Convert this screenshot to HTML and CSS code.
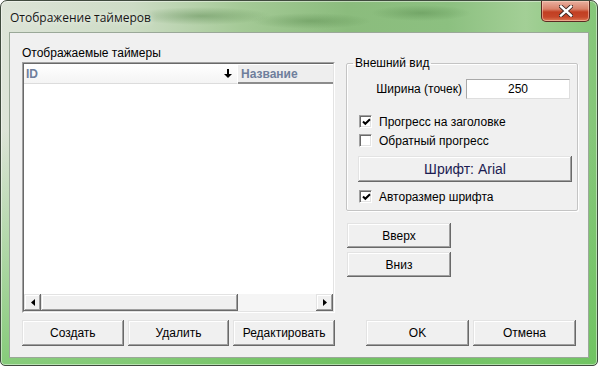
FILE: index.html
```html
<!DOCTYPE html>
<html lang="ru">
<head>
  <meta charset="UTF-8" />
  <title>Отображение таймеров</title>
  <link rel="stylesheet" href="styles.css">
</head>
<body>
  <div class="window">
    <div class="titlebar">
      <span class="title">Отображение таймеров</span>
      <button class="close" type="button" aria-label="Закрыть">
        <svg width="14" height="12" viewBox="0 0 14 12">
          <path d="M2 1.5 L12 10.5 M12 1.5 L2 10.5" stroke="#3a2520" stroke-width="4.2" stroke-linecap="square"/>
          <path d="M2 1.5 L12 10.5 M12 1.5 L2 10.5" stroke="#ffffff" stroke-width="2.4" stroke-linecap="square"/>
        </svg>
      </button>
    </div>

    <div class="client">
      <div class="left-col">
        <div class="caption">Отображаемые таймеры</div>
        <div class="list">
          <div class="list-inner">
            <div class="list-head">
              <div class="col col-id">
                ID
                <svg class="sort-arrow" width="8" height="9" viewBox="0 0 8 9">
                  <path d="M3 0h2v5h3l-4 4-4-4h3z" fill="#000"/>
                </svg>
              </div>
              <div class="col col-name">Название</div>
            </div>
            <div class="list-body"></div>
            <div class="hscroll">
              <span class="sb-btn">
                <svg width="4" height="7" viewBox="0 0 4 7"><path d="M4 0v7L0 3.5z" fill="#000"/></svg>
              </span>
              <span class="sb-thumb"></span>
              <span class="sb-track"></span>
              <span class="sb-btn">
                <svg width="4" height="7" viewBox="0 0 4 7"><path d="M0 0v7l4-3.5z" fill="#000"/></svg>
              </span>
            </div>
          </div>
        </div>
        <div class="btn-row">
          <button class="btn" type="button">Создать</button>
          <button class="btn" type="button">Удалить</button>
          <button class="btn" type="button">Редактировать</button>
        </div>
      </div>

      <div class="right-col">
        <fieldset class="group">
          <legend>Внешний вид</legend>
          <div class="field-row">
            <label for="width">Ширина (точек)</label>
            <input id="width" class="text-input" type="text" value="250">
          </div>
          <div class="check">
            <span class="box">
              <svg width="9" height="9" viewBox="0 0 9 9"><path d="M1 3.5 L3.3 5.8 L8 1.2" stroke="#000" stroke-width="2" fill="none"/></svg>
            </span>
            Прогресс на заголовке
          </div>
          <div class="check">
            <span class="box"></span>
            Обратный прогресс
          </div>
          <button class="btn font-btn" type="button">Шрифт: Arial</button>
          <div class="check check-last">
            <span class="box">
              <svg width="9" height="9" viewBox="0 0 9 9"><path d="M1 3.5 L3.3 5.8 L8 1.2" stroke="#000" stroke-width="2" fill="none"/></svg>
            </span>
            Авторазмер шрифта
          </div>
        </fieldset>

        <div class="move-btns">
          <button class="btn" type="button">Вверх</button>
          <button class="btn" type="button">Вниз</button>
        </div>

        <div class="dialog-btns">
          <button class="btn" type="button">OK</button>
          <button class="btn" type="button">Отмена</button>
        </div>
      </div>
    </div>
  </div>
</body>
</html>
```

FILE: styles.css
```css
:root {
  --face: #f0f0f0;
  --shadow: #a0a0a0;
  --dark: #696969;
  --light: #e3e3e3;
  --white: #ffffff;
  --text: #000000;
}

* {
  box-sizing: border-box;
  margin: 0;
  padding: 0;
}

body {
  background: #ffffff;
  font-family: 'Liberation Sans', Arial, sans-serif;
  font-size: 12px;
  color: var(--text);
}

.window {
  width: 598px;
  height: 366px;
  border: 1px solid #3f4a3d;
  border-radius: 7px 7px 5px 5px;
  display: flex;
  flex-direction: column;
  padding: 0 8px 7px 8px;
  box-shadow: inset 0 0 0 1px rgba(255, 255, 255, 0.45);
  background:
    radial-gradient(ellipse 70px 9px at 200px 15px, rgba(70, 120, 60, 0.4), transparent),
    radial-gradient(ellipse 60px 8px at 310px 20px, rgba(70, 120, 60, 0.35), transparent),
    radial-gradient(ellipse 50px 8px at 420px 12px, rgba(70, 120, 60, 0.35), transparent),
    linear-gradient(180deg, transparent 0, transparent 35%, rgba(105, 195, 90, 0.75) 100%),
    linear-gradient(90deg, #dde4d8 0%, #cddcc5 22%, #a5ca97 40%, #8bbc7d 58%, #8cc080 75%, #a3cf96 88%, #84c678 100%);
}

.titlebar {
  height: 31px;
  display: flex;
  align-items: flex-start;
  justify-content: space-between;
}

.title {
  font-family: 'Open Sans', 'Noto Sans', sans-serif;
  font-size: 12px;
  color: #161616;
  margin: 8px 0 0 1px;
  text-shadow: 0 0 6px rgba(255, 255, 255, 0.9);
}

.close {
  width: 49px;
  height: 21px;
  margin-right: -1px;
  border: 1px solid #5b2a22;
  border-top: none;
  border-radius: 0 0 5px 5px;
  display: flex;
  align-items: center;
  justify-content: center;
  background: linear-gradient(180deg, #e9b0a0 0%, #d9826a 40%, #c23f22 55%, #c6472a 80%, #de7a55 100%);
  box-shadow: inset 0 0 0 1px rgba(255, 220, 200, 0.5);
}

.client {
  flex: 1;
  display: flex;
  background: var(--face);
  border: 1px solid #9aa898;
  padding: 0 10px 11px 12px;
}

.left-col {
  width: 313px;
  display: flex;
  flex-direction: column;
  padding-top: 13px;
}

.caption {
  line-height: 14px;
  margin-bottom: 2px;
}

.list {
  flex: 1;
  display: flex;
  border: 1px solid;
  border-color: var(--shadow) var(--white) var(--white) var(--shadow);
}

.list-inner {
  flex: 1;
  display: flex;
  flex-direction: column;
  background: var(--white);
  border: 1px solid;
  border-color: var(--dark) var(--light) var(--light) var(--dark);
}

.list-head {
  display: flex;
  height: 20px;
}

.col {
  display: flex;
  align-items: center;
  font-weight: bold;
  color: #6f7f9c;
  padding-left: 2px;
}

.col-id {
  width: 214px;
  justify-content: space-between;
  padding-right: 5px;
  background: linear-gradient(180deg, #ffffff, #f4f4f4);
  border-bottom: 1px solid #dcdcdc;
  border-right: 1px solid var(--white);
}

.col-name {
  flex: 1;
  padding-left: 3px;
  background: #eeeeee;
  border-top: 1px solid var(--white);
  border-bottom: 2px solid #8c8c8c;
}

.list-body {
  flex: 1;
}

.hscroll {
  display: flex;
  height: 17px;
}

.sb-btn,
.sb-thumb,
.btn {
  background: var(--face);
  box-shadow:
    inset -1px -1px var(--dark),
    inset 1px 1px var(--light),
    inset -2px -2px var(--shadow),
    inset 2px 2px var(--white);
}

.sb-btn {
  width: 17px;
  display: flex;
  align-items: center;
  justify-content: center;
}

.sb-thumb {
  width: 197px;
}

.sb-track {
  flex: 1;
  background: #f5f5f5;
}

.btn {
  border: none;
  font-family: inherit;
  font-size: 12px;
  color: var(--text);
  height: 26px;
}

.btn-row {
  display: grid;
  grid-template-columns: repeat(3, 1fr);
  gap: 4px;
  margin-top: 7px;
}

.right-col {
  width: 232px;
  margin-left: 11px;
  display: flex;
  flex-direction: column;
  padding-top: 23px;
}

.group {
  border: 1px solid #c4c4c4;
  border-radius: 2px;
  box-shadow: inset 1px 1px var(--white), 1px 1px var(--white);
  padding: 9px 0 4px 0;
  min-width: 0;
}

.group legend {
  line-height: 14px;
  padding: 0 2px;
  margin-left: 6px;
}

.field-row {
  display: flex;
  justify-content: flex-end;
  align-items: center;
  gap: 4px;
  padding-right: 7px;
  margin-bottom: 13px;
}

.text-input {
  width: 104px;
  height: 20px;
  border: 1px solid;
  border-color: #a9a9a9 #dedede #dedede #a9a9a9;
  background: var(--white);
  font-family: inherit;
  font-size: 12px;
  text-align: center;
  outline: none;
}

.check {
  display: flex;
  align-items: center;
  gap: 7px;
  height: 19px;
  padding-left: 12px;
}

.box {
  width: 13px;
  height: 13px;
  display: flex;
  align-items: center;
  justify-content: center;
  background: var(--white);
  border: 1px solid;
  border-color: var(--shadow) var(--white) var(--white) var(--shadow);
  box-shadow: inset 1px 1px var(--dark), inset -1px -1px var(--light);
}

.box svg {
  margin: 1px 0 0 1px;
}

.font-btn {
  display: block;
  width: 214px;
  margin: 6px 0 0 11px;
  font-size: 14px;
  color: #1c1c52;
}

.check-last {
  margin-top: 5px;
}

.move-btns {
  display: flex;
  flex-direction: column;
  gap: 4px;
  margin: 12px 0 0 1px;
}

.move-btns .btn {
  width: 104px;
  height: 25px;
}

.dialog-btns {
  margin-top: auto;
  display: flex;
  justify-content: flex-end;
  gap: 4px;
  padding-right: 2px;
}

.dialog-btns .btn {
  width: 103px;
}
```
